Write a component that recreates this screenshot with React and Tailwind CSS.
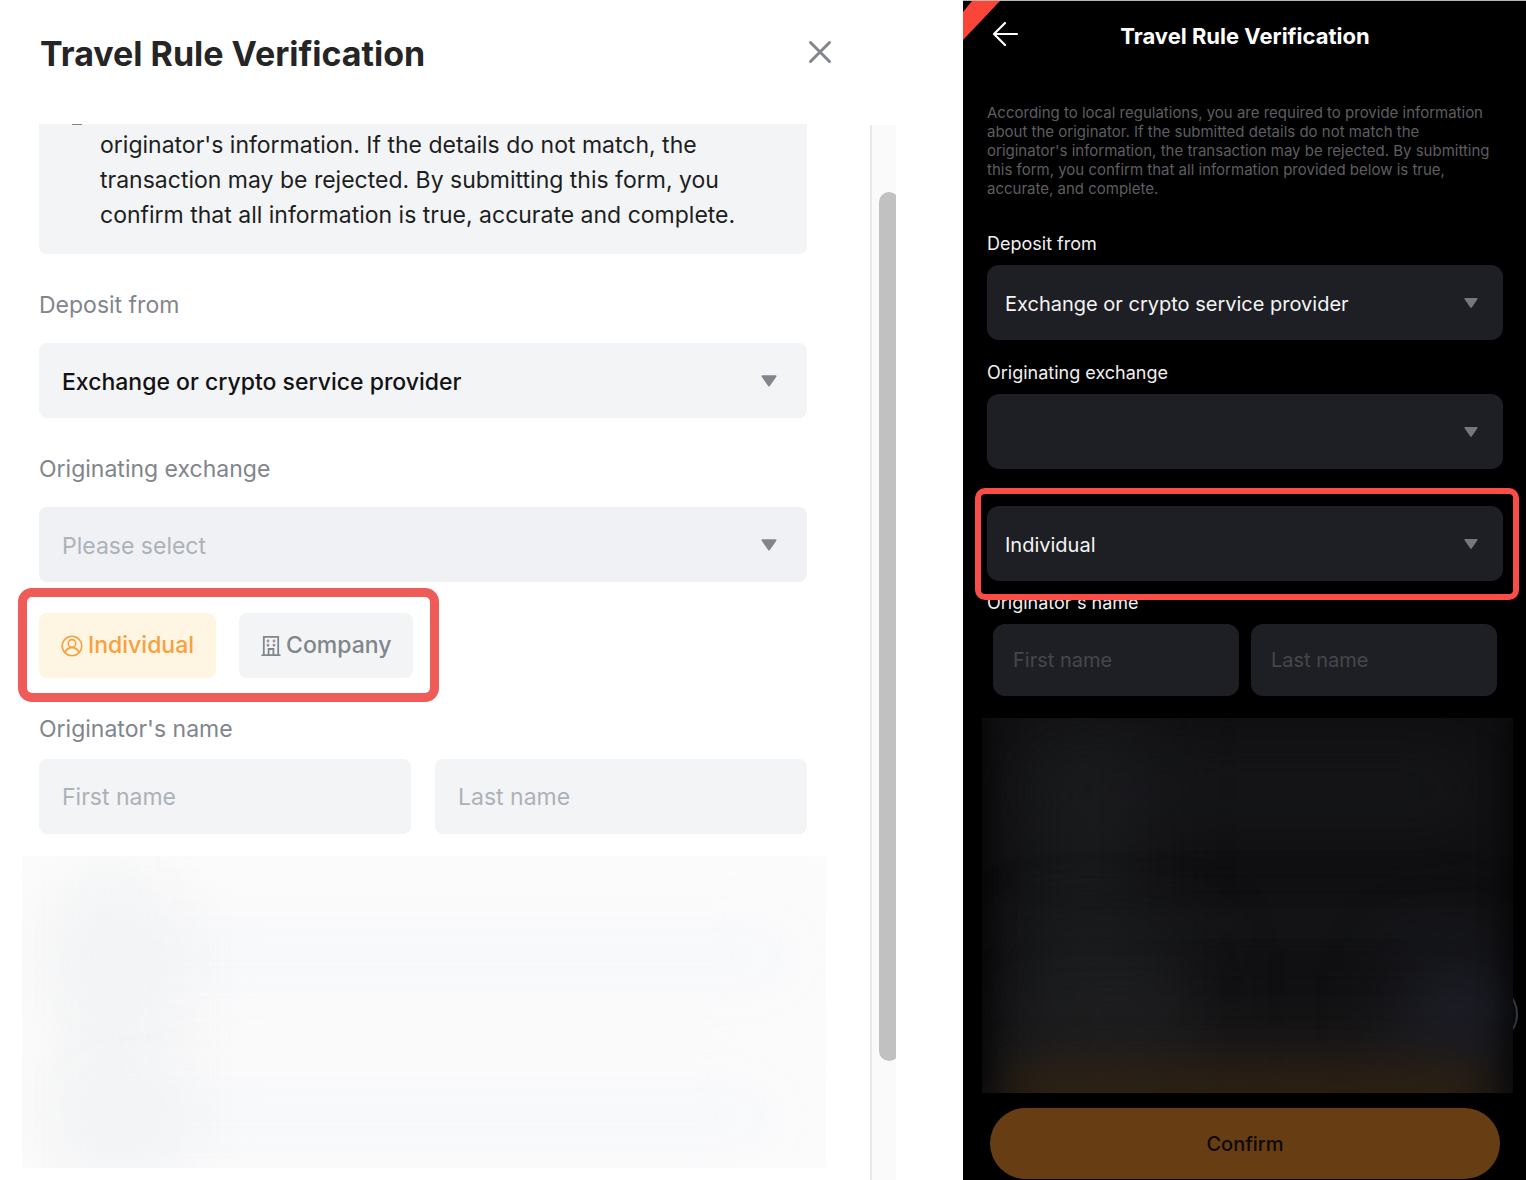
import { useState } from "react";

const providers = ["Exchange or crypto service provider", "Private wallet"];

function Caret({ className }) {
    return (
        <svg viewBox="0 0 16 12" className={`pointer-events-none absolute h-3 ${className}`} fill="currentColor" stroke="currentColor" strokeWidth="2" strokeLinejoin="round" aria-hidden="true">
            <path d="M1.5 1.2H14.5L8 10.500Z" />
        </svg>
    );
}

function UserIcon() {
    return (
        <svg viewBox="0 0 22 22" className="size-[22px]" fill="none" stroke="currentColor" strokeWidth="1.6" aria-hidden="true">
            <circle cx="11" cy="11" r="9.8" />
            <circle cx="11" cy="8.4" r="3.8" />
            <path d="M3.8 17.6C5.4 14.2 8 12.6 11 12.6S16.6 14.2 18.2 17.6" />
        </svg>
    );
}

function BuildingIcon() {
    return (
        <svg viewBox="0 0 20 22" className="w-5 h-[22px]" fill="none" stroke="currentColor" strokeWidth="1.8" aria-hidden="true">
            <path d="M0.5 20.2H19.5M2.8 20.2V1.8H17.2V20.2M7.6 20.2V14H12.4V20.2" />
            <path d="M5.5 6H8.5M11.5 6H14.5M5.5 10.2H8.5M11.5 10.2H14.5M7 4.5V7.5M13 4.5V7.5M7 8.7V11.7M13 8.7V11.7" strokeWidth="1.2" />
        </svg>
    );
}

// Desktop dialog, light theme
function WebDialog() {
    const [kind, setKind] = useState("individual");
    const label = "block text-[23px] leading-7 text-[#81858c]";
    const select = "block w-full h-[75px] rounded-lg pl-[23px] pr-16 pt-[3px] text-[23px] appearance-none outline-none";
    const input = "min-w-0 h-[75px] rounded-lg bg-[#f3f4f6] px-[23px] text-[23px] placeholder:text-[#adb1b8] outline-none";
    const toggle = "flex h-[65px] items-center gap-[5px] rounded-lg px-[22px] text-[23px] font-medium";

    return (
        <section className="flex flex-col bg-white">
            <header className="flex h-[124px] items-start justify-between pl-10 pr-[64px] pt-8">
                <h1 className="text-[34px] leading-[44px] font-bold text-[#252525]">Travel Rule Verification</h1>
                <button type="button" aria-label="Close" className="mt-2 text-[#81858c]">
                    <svg viewBox="0 0 24 24" className="size-6" fill="none" stroke="currentColor" strokeWidth="3" strokeLinecap="round">
                        <path d="M2.5 2.5L21.5 21.5M21.5 2.5L2.5 21.5" />
                    </svg>
                </button>
            </header>

            <div className="flex grow">
                <form className="grow pl-[39px] pr-[63px]" onSubmit={(e) => e.preventDefault()}>
                    <div className="h-[130px] rounded-b-lg bg-[#f3f4f6]">
                        {/* lower edge of the notice icon, the rest is scrolled away */}
                        <svg viewBox="0 0 12 2" className="block ml-8 w-3 h-0.5" aria-hidden="true">
                            <path d="M1 0H11" stroke="#81858c" strokeWidth="2" />
                        </svg>
                        <p className="pl-[61px] pr-12 pt-0.5 text-[23px] leading-[35px] text-[#1c1e21]">
                            originator's information. If the details do not match, the transaction may be rejected. By submitting this form, you confirm that all information is true, accurate and complete.
                        </p>
                    </div>

                    <label htmlFor="web-from" className={`${label} mt-[37px]`}>Deposit from</label>
                    <div className="relative mt-6">
                        <select id="web-from" className={`${select} bg-[#f3f4f6] font-medium text-[#121214]`}>
                            {providers.map((p) => <option key={p}>{p}</option>)}
                        </select>
                        <Caret className="w-4 right-[30px] top-8 text-[#81858c]" />
                    </div>

                    <label htmlFor="web-exchange" className={`${label} mt-[37px]`}>Originating exchange</label>
                    <div className="relative mt-6">
                        <select id="web-exchange" className={`${select} bg-[#f0f1f5] text-[#adb1b8]`}>
                            <option>Please select</option>
                        </select>
                        <Caret className="w-4 right-[30px] top-8 text-[#81858c]" />
                    </div>

                    <div className="relative mt-[31px] flex w-fit gap-[23px]">
                        <button type="button" aria-pressed={kind === "individual"} onClick={() => setKind("individual")} className={`${toggle} ${kind === "individual" ? "bg-[#fff5e3] text-[#f7a13d]" : "bg-[#f3f4f6] text-[#81858c]"}`}>
                            <UserIcon /> Individual
                        </button>
                        <button type="button" aria-pressed={kind === "company"} onClick={() => setKind("company")} className={`${toggle} ${kind === "company" ? "bg-[#fff5e3] text-[#f7a13d]" : "bg-[#f3f4f6] text-[#81858c]"}`}>
                            <BuildingIcon /> Company
                        </button>
                        <div className="pointer-events-none absolute -left-[21px] -right-[26px] -top-[25px] -bottom-6 rounded-[14px] border-[9px] border-[#ef5b56]" />
                    </div>

                    <fieldset className="mt-[37px]">
                        <legend className={label}>Originator's name</legend>
                        <div className="mt-4 grid grid-cols-2 gap-6">
                            <input aria-label="First name" placeholder="First name" className={input} />
                            <input aria-label="Last name" placeholder="Last name" className={input} />
                        </div>
                    </fieldset>

                    {/* hidden fields */}
                    <div className="relative mt-[22px] -ml-[17px] -mr-[19px] h-[312px] overflow-hidden bg-[#fcfcfc]">
                        <div className="absolute left-12 top-0 h-full w-20 bg-[#f4f5f6] blur-2xl" />
                        <div className="absolute left-12 right-4 top-[70px] h-16 bg-[#f5f6f9] blur-2xl" />
                        <div className="absolute left-12 right-8 top-[230px] h-16 bg-[#f5f6f9] blur-2xl" />
                        <div className="absolute left-14 top-20 h-14 w-24 bg-[#edeff1] blur-2xl" />
                        <div className="absolute left-14 top-[230px] h-14 w-24 bg-[#edeff1] blur-2xl" />
                    </div>
                </form>

                <div className="mt-px w-[26px] shrink-0 overflow-hidden border-l-2 border-[#e8e8e8] bg-[#fafafa]">
                    <div className="ml-[7px] mt-[67px] h-[869px] w-5 rounded-full bg-[#c1c1c1]" />
                </div>
            </div>
        </section>
    );
}

// Mobile screen, dark theme
function MobileScreen() {
    const label = "block text-lg leading-[26px] text-[#f0f0f0]";
    const select = "block w-full h-[75px] rounded-xl bg-[#1e1f24] pl-[18px] pr-14 pt-0.5 text-xl text-[#f4f4f4] appearance-none outline-none";
    const input = "min-w-0 h-[72px] rounded-xl bg-[#1e1f24] px-5 text-xl text-white placeholder:text-[#45474b] outline-none";

    return (
        <section className="relative flex flex-col overflow-hidden border-t border-[#b5b8b5] bg-black pl-6 pr-[23px]">
            <svg viewBox="0 0 40 40" className="absolute left-0 top-0 size-10" aria-hidden="true">
                <path d="M9 0H37L0 39V11Z" fill="#fa4638" />
            </svg>
            <header className="relative flex h-[102px] justify-center pt-5">
                <button type="button" aria-label="Back" className="absolute left-1 top-[19px] text-white">
                    <svg viewBox="0 0 28 28" className="size-7" fill="none" stroke="currentColor" strokeWidth="2.2" strokeLinecap="round" strokeLinejoin="round">
                        <path d="M14 3L3 14L14 25M3 14H26" />
                    </svg>
                </button>
                <h2 className="text-[22px] leading-[30px] font-bold text-white">Travel Rule Verification</h2>
            </header>

            <p className="pr-1 text-[15px] leading-[19px] text-[#5e5e60]">
                According to local regulations, you are required to provide information about the originator. If the submitted details do not match the originator's information, the transaction may be rejected. By submitting this form, you confirm that all information provided below is true, accurate, and complete.
            </p>

            <form onSubmit={(e) => e.preventDefault()}>
                <label htmlFor="app-from" className={`${label} mt-[33px]`}>Deposit from</label>
                <div className="relative mt-2">
                    <select id="app-from" className={select}>
                        {providers.map((p) => <option key={p}>{p}</option>)}
                    </select>
                    <Caret className="w-3.5 right-[25px] top-8 text-[#77787b]" />
                </div>

                <label htmlFor="app-exchange" className={`${label} mt-5`}>Originating exchange</label>
                <div className="relative mt-2">
                    <select id="app-exchange" className={select}>
                        <option></option>
                    </select>
                    <Caret className="w-3.5 right-[25px] top-8 text-[#77787b]" />
                </div>

                <div className="relative z-10 mt-[37px]">
                    <select aria-label="Originator type" className={select}>
                        <option>Individual</option>
                        <option>Company</option>
                    </select>
                    <Caret className="w-3.5 right-[25px] top-8 text-[#77787b]" />
                    <div className="pointer-events-none absolute -left-3 -right-4 -top-[18px] -bottom-[19px] rounded-[10px] border-[6px] border-[#fa4d48]" />
                </div>

                <fieldset className="mt-[9px]">
                    <legend className={label}>Originator's name</legend>
                    <div className="mt-2 mx-1.5 grid grid-cols-2 gap-3">
                        <input aria-label="First name" placeholder="First name" className={input} />
                        <input aria-label="Last name" placeholder="Last name" className={input} />
                    </div>
                </fieldset>

                {/* hidden fields, with the edge of the floating help bubble behind them */}
                <div className="relative mt-[22px] -ml-[5px] -mr-2.5">
                    <div className="absolute -right-[5px] top-[266px] size-[60px] rounded-full border-2 border-[#34363d] bg-[#08090d]" />
                    <div className="relative h-[375px] overflow-hidden bg-[#0f0f11]">
                        <div className="absolute left-12 top-0 h-full w-28 bg-[#1a1b1d] blur-2xl" />
                        <div className="absolute left-12 right-8 top-12 h-12 bg-[#1a1b1e] blur-2xl" />
                        <div className="absolute left-12 right-8 top-[190px] h-8 bg-[#17181b] blur-xl" />
                        <div className="absolute left-12 top-[230px] h-32 w-40 bg-[#1d1e20] blur-2xl" />
                        <div className="absolute left-8 right-8 top-[315px] h-16 bg-[#1f1d1d] blur-2xl" />
                        <div className="absolute right-2 top-[250px] h-20 w-24 bg-[#222430] blur-2xl" />
                        <div className="absolute left-6 right-6 -bottom-4 h-9 bg-[#38260f] blur-xl" />
                        <div className="absolute -left-4 top-0 h-full w-6 bg-black/60 blur-md" />
                        <div className="absolute -right-4 top-0 h-full w-6 bg-black/60 blur-md" />
                    </div>
                </div>

                <button type="submit" className="mt-[15px] mx-[3px] block h-[71px] w-[calc(100%-6px)] rounded-full bg-[#673e13] text-xl font-medium text-[#0d0906]">Confirm</button>
            </form>
        </section>
    );
}

export default function App() {
    return (
        <main className="grid min-h-screen grid-cols-[896fr_563fr] gap-[67px] bg-white font-['Inter','Liberation_Sans',sans-serif]">
            <WebDialog />
            <MobileScreen />
        </main>
    );
}
